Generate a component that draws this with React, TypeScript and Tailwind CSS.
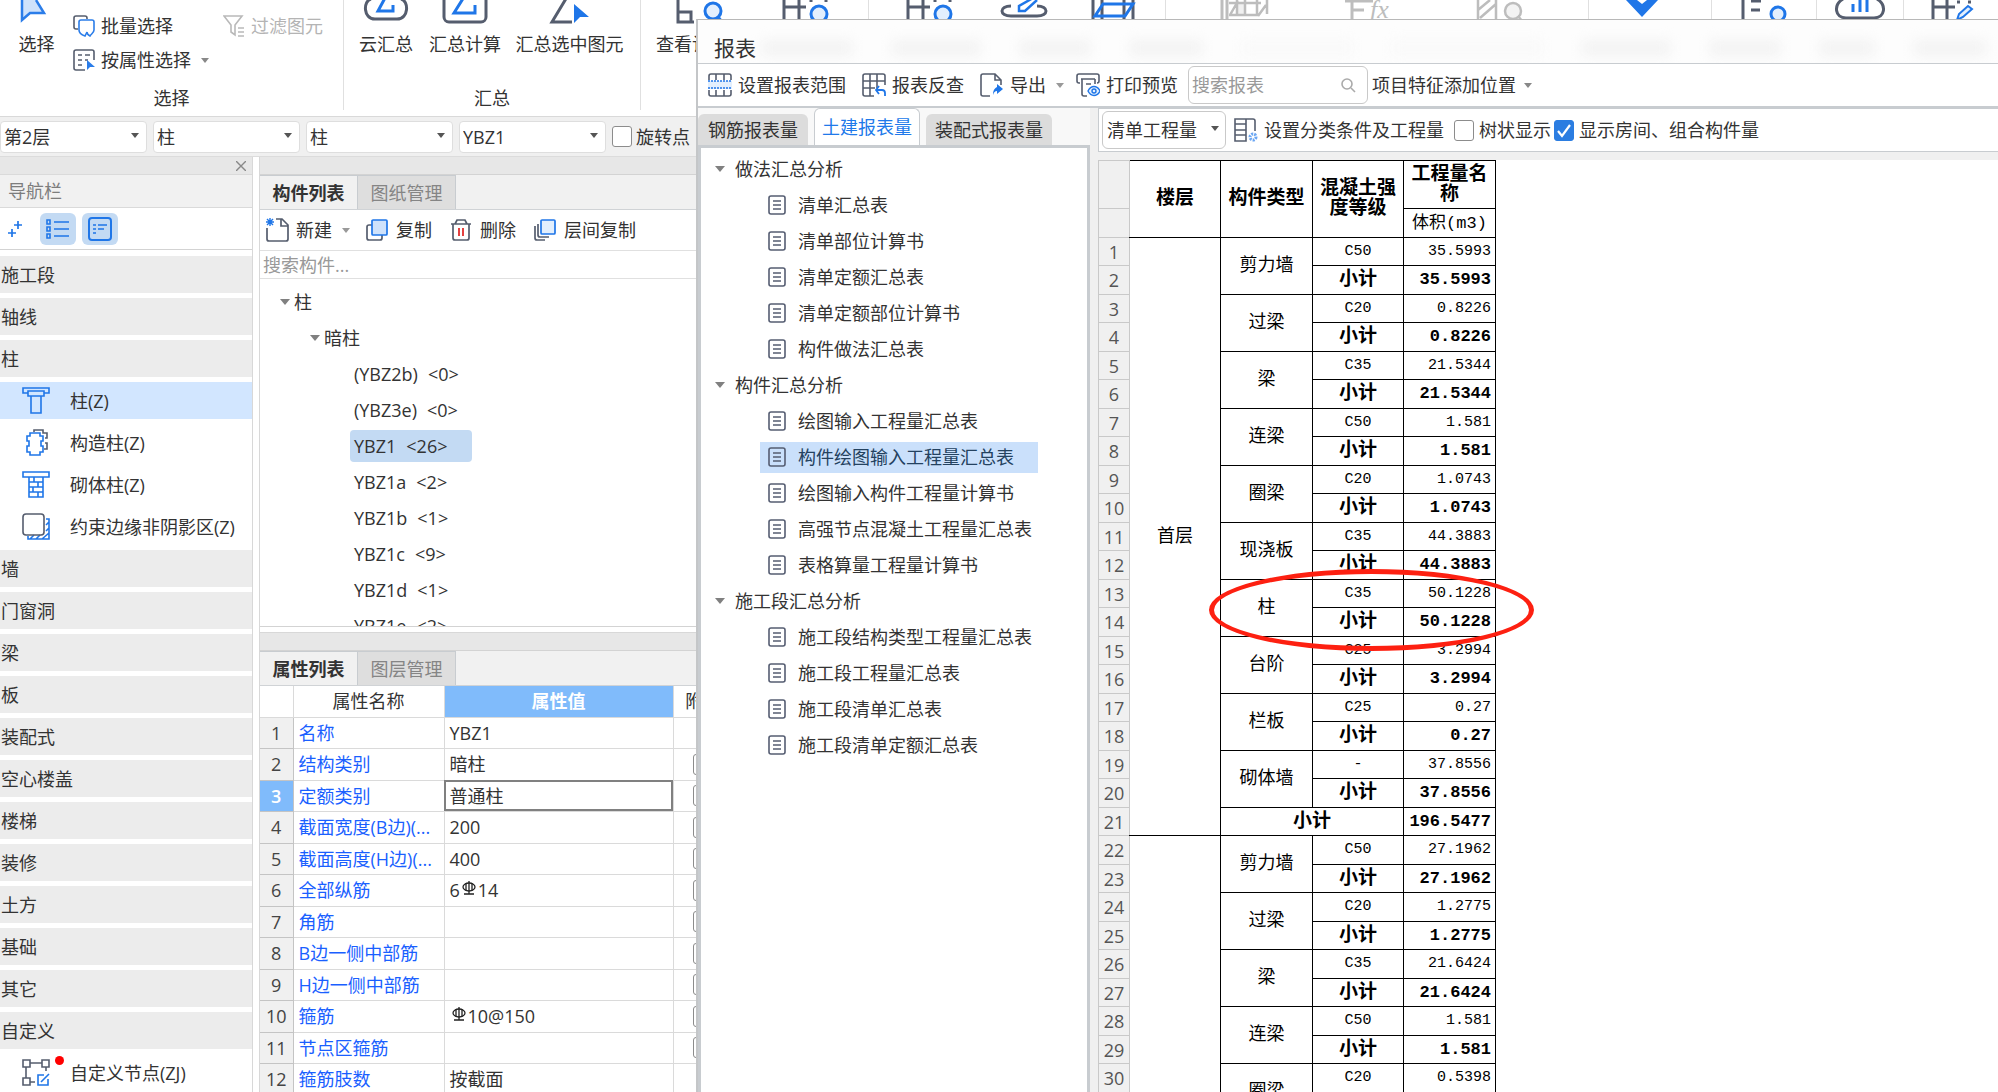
import { useState, type ReactNode } from 'react';

/**
 * Takeoff workspace with the report window open over it.
 *
 *   • Ribbon and context selectors along the top.
 *   • Navigation bar, component tree and property grid on the left.
 *   • Report window: report tree + quantity table.
 */

const NAV: { label: string; icon?: ReactNode; active?: boolean; dot?: boolean }[] = [
  { label: '施工段' },
  { label: '轴线' },
  { label: '柱' },
  { label: '柱(Z)', icon: <ColumnIcon />, active: true },
  { label: '构造柱(Z)', icon: <TieColumnIcon /> },
  { label: '砌体柱(Z)', icon: <MasonryIcon /> },
  { label: '约束边缘非阴影区(Z)', icon: <EdgeZoneIcon /> },
  { label: '墙' },
  { label: '门窗洞' },
  { label: '梁' },
  { label: '板' },
  { label: '装配式' },
  { label: '空心楼盖' },
  { label: '楼梯' },
  { label: '装修' },
  { label: '土方' },
  { label: '基础' },
  { label: '其它' },
  { label: '自定义' },
  { label: '自定义节点(ZJ)', icon: <CustomNodeIcon />, dot: true },
];

const COMPONENTS = [
  { name: '(YBZ2b)', count: 0 },
  { name: '(YBZ3e)', count: 0 },
  { name: 'YBZ1', count: 26, active: true },
  { name: 'YBZ1a', count: 2 },
  { name: 'YBZ1b', count: 1 },
  { name: 'YBZ1c', count: 9 },
  { name: 'YBZ1d', count: 1 },
  { name: 'YBZ1e', count: 2 },
];

const PROPS: { name: string; value: ReactNode; extra?: boolean }[] = [
  { name: '名称', value: 'YBZ1' },
  { name: '结构类别', value: '暗柱', extra: true },
  { name: '定额类别', value: '普通柱', extra: true },
  { name: '截面宽度(B边)(...', value: '200', extra: true },
  { name: '截面高度(H边)(...', value: '400', extra: true },
  { name: '全部纵筋', value: <>6<RebarMark />14</>, extra: true },
  { name: '角筋', value: '', extra: true },
  { name: 'B边一侧中部筋', value: '', extra: true },
  { name: 'H边一侧中部筋', value: '', extra: true },
  { name: '箍筋', value: <><RebarMark />10@150</>, extra: true },
  { name: '节点区箍筋', value: '', extra: true },
  { name: '箍筋肢数', value: '按截面' },
];

const REPORTS = [
  { title: '做法汇总分析', items: ['清单汇总表', '清单部位计算书', '清单定额汇总表', '清单定额部位计算书', '构件做法汇总表'] },
  {
    title: '构件汇总分析',
    items: ['绘图输入工程量汇总表', '构件绘图输入工程量汇总表', '绘图输入构件工程量计算书', '高强节点混凝土工程量汇总表', '表格算量工程量计算书'],
  },
  { title: '施工段汇总分析', items: ['施工段结构类型工程量汇总表', '施工段工程量汇总表', '施工段清单汇总表', '施工段清单定额汇总表'] },
];

type Entry = { type: string; grade: string; volume: string };
const FLOORS: { name: string; entries: Entry[]; total?: string }[] = [
  {
    name: '首层',
    total: '196.5477',
    entries: [
      { type: '剪力墙', grade: 'C50', volume: '35.5993' },
      { type: '过梁', grade: 'C20', volume: '0.8226' },
      { type: '梁', grade: 'C35', volume: '21.5344' },
      { type: '连梁', grade: 'C50', volume: '1.581' },
      { type: '圈梁', grade: 'C20', volume: '1.0743' },
      { type: '现浇板', grade: 'C35', volume: '44.3883' },
      { type: '柱', grade: 'C35', volume: '50.1228' },
      { type: '台阶', grade: 'C25', volume: '3.2994' },
      { type: '栏板', grade: 'C25', volume: '0.27' },
      { type: '砌体墙', grade: '-', volume: '37.8556' },
    ],
  },
  {
    name: '',
    entries: [
      { type: '剪力墙', grade: 'C50', volume: '27.1962' },
      { type: '过梁', grade: 'C20', volume: '1.2775' },
      { type: '梁', grade: 'C35', volume: '21.6424' },
      { type: '连梁', grade: 'C50', volume: '1.581' },
      { type: '圈梁', grade: 'C20', volume: '0.5398' },
    ],
  },
];

export default function App() {
  return (
    <div className="relative flex h-screen w-full flex-col overflow-hidden bg-white font-['Open_Sans','Noto_Sans_CJK_SC',sans-serif] text-lg leading-6 text-[#333]">
      <Ribbon />
      <ContextBar />
      <div className="flex min-h-0 flex-1">
        <NavPanel />
        <div className="flex min-w-0 flex-1 flex-col border-l border-[#d8d8d8]">
          <ComponentPanel />
          <PropertyPanel />
        </div>
      </div>
      <ReportWindow />
    </div>
  );
}

/* ---------- ribbon ---------- */

function Ribbon() {
  return (
    <header className="flex h-[117px] shrink-0 items-start overflow-hidden border-b border-[#d9d9d9] bg-white whitespace-nowrap">
      <section className="flex h-[110px] w-[344px] shrink-0 flex-col justify-between border-r border-[#e0e0e0]">
        <div className="flex">
          <RibbonTool label="选择" width="w-[73px]">
            <path d="M5 0v20l8-7h13L18 0z" fill="#cfe2fb" />
            <path d="M5 0v20l8-7h14L19 0" fill="none" stroke="#2b7de9" strokeWidth="2.5" />
          </RibbonTool>
          <div className="flex w-[140px] flex-col gap-2.5 pt-[14px]">
            <button className="flex items-center gap-1.5">
              <svg className="size-[22px]" viewBox="0 0 22 22" fill="none" strokeWidth="1.6">
                <path d="M5 14H3a2 2 0 0 1-2-2V3a2 2 0 0 1 2-2h9a2 2 0 0 1 2 2v1" stroke="#555d6e" />
                <path d="M6 7a2 2 0 0 1 2-2h11a2 2 0 0 1 2 2v8c0 3-3 4-4 6-2-1-3-2-3-4l-2 4c-3-1-6-3-6-6z" stroke="#2b7de9" />
              </svg>
              批量选择
            </button>
            <button className="flex items-center gap-1.5">
              <svg className="size-[22px]" viewBox="0 0 22 22" fill="none" strokeWidth="1.6">
                <path d="M12 21H3a2 2 0 0 1-2-2V3a2 2 0 0 1 2-2h16a2 2 0 0 1 2 2v8M5 6h4m3 0h5M5 11h4m3 0h3M5 16h4" stroke="#555d6e" />
                <path d="M14 11v10l3-3h5z" fill="#2b7de9" />
              </svg>
              按属性选择
              <Caret className="ml-1 text-[#888]" />
            </button>
          </div>
          <div className="flex flex-1 flex-col pt-[14px] pl-2.5 text-[#b4b4b4]">
            <button className="flex items-center gap-1.5" disabled>
              <svg className="size-[22px]" viewBox="0 0 22 22" fill="none" stroke="#b9b9b9" strokeWidth="1.6">
                <path d="M1 1h18l-7 9v10l-4-3v-7zM15 13h6M15 17h6M15 21h6" />
              </svg>
              过滤图元
            </button>
          </div>
        </div>
        <div className="text-center">选择</div>
      </section>

      <section className="flex h-[110px] w-[297px] shrink-0 flex-col justify-between border-r border-[#e0e0e0]">
        <div className="flex pl-[5px]">
          <RibbonTool label="云汇总" width="w-[74px]">
            <path d="M5 -1C-3 1 -3 19 9 19h22C43 19 43 1 35 -1" fill="none" stroke="#555d6e" strokeWidth="3" />
            <path d="M19 -2l-7 13h15V5" fill="none" stroke="#1f76e8" strokeWidth="3" />
          </RibbonTool>
          <RibbonTool label="汇总计算" width="w-[84px]">
            <path d="M-1 -2v19a5 5 0 0 0 5 5h32a5 5 0 0 0 5-5V-2" fill="none" stroke="#555d6e" strokeWidth="3" />
            <path d="M19 -3L9 13h21V5" fill="none" stroke="#1f76e8" strokeWidth="3" />
          </RibbonTool>
          <RibbonTool label="汇总选中图元" width="w-[125px]">
            <path d="M17 -3L2 22h20" fill="none" stroke="#555d6e" strokeWidth="3" />
            <path d="M24 4v19l6-6h9z" fill="#1f76e8" />
          </RibbonTool>
        </div>
        <div className="text-center">汇总</div>
      </section>

      <section className="flex h-[110px] w-[228px] shrink-0 border-r border-[#e0e0e0]">
        <RibbonTool label="查看计算式" width="w-[120px]">
          <path d="M-3 -1v23h16M-3 12h13v10" fill="none" stroke="#555d6e" strokeWidth="3" />
          <circle cx="32" cy="11" r="8" fill="#e3effd" stroke="#1f76e8" strokeWidth="3" />
          <path d="M37 17l5 6" stroke="#1f76e8" strokeWidth="3" />
        </RibbonTool>
        <RibbonTool width="w-[88px]"><GridSearch /></RibbonTool>
      </section>

      <section className="flex h-[110px] w-[297px] shrink-0 border-r border-[#e0e0e0]">
        <RibbonTool width="w-[120px]"><GridSearch /></RibbonTool>
        <RibbonTool width="w-[70px]">
          <path d="M7 6c-12 0-12 10 0 10h26c12 0 12-10 0-10" fill="none" stroke="#555d6e" strokeWidth="3" />
          <path d="M29 -2L15 6v5h6L33 0" fill="none" stroke="#1f76e8" strokeWidth="2.5" />
        </RibbonTool>
        <RibbonTool width="w-[107px]">
          <path d="M0 0v24M9 0v24M31 0v24M40 0v24" stroke="#555d6e" strokeWidth="3" />
          <path d="M10 4h30l-8 12H2z" fill="none" stroke="#1f76e8" strokeWidth="3" />
        </RibbonTool>
      </section>

      <section className="flex h-[110px] w-[423px] shrink-0 border-r border-[#e0e0e0]">
        <RibbonTool width="w-[158px]">
          <path d="M12 3h8v12h-8z" fill="#f0f0f0" />
          <path d="M-3 0v24M2 0v24" stroke="#bdbdbd" strokeWidth="3" />
          <path d="M12 0v16M20 0v16M32 0v16M4 3h32M4 15h30M5 15l8-14M33 16l8-11M42 0v14" fill="none" stroke="#bdbdbd" strokeWidth="2.5" />
        </RibbonTool>
        <RibbonTool width="w-[86px]">
          <path d="M-2 1h28M5 0v24M5 10h12" fill="none" stroke="#bdbdbd" strokeWidth="3" />
          <text x="23" y="18" className="font-['Liberation_Serif',serif] text-[26px] italic" fill="#bdbdbd">fx</text>
        </RibbonTool>
        <RibbonTool width="w-[179px]">
          <path d="M-2 0v24M16 0v24M-2 10L10 0M0 18L16 4" fill="none" stroke="#bdbdbd" strokeWidth="2.5" />
          <circle cx="33" cy="11" r="8" fill="#f3f3f3" stroke="#bdbdbd" strokeWidth="2.5" />
          <path d="M38 16l4 5" stroke="#bdbdbd" strokeWidth="2.5" />
        </RibbonTool>
      </section>

      <section className="flex h-[110px] w-[123px] shrink-0 border-r border-[#e0e0e0]">
        <RibbonTool width="w-[105px]">
          <path d="M4 0h11l5 4 5-4h11L20 17z" fill="#1f76e8" />
        </RibbonTool>
      </section>
      <section className="h-[110px] w-[105px] shrink-0 border-r border-[#e0e0e0]">
        <RibbonTool width="w-full">
          <path d="M-1 0v24M7 1h10M7 10h9" stroke="#555d6e" strokeWidth="3" />
          <circle cx="34" cy="14" r="7" fill="#e3effd" stroke="#1f76e8" strokeWidth="3" />
        </RibbonTool>
      </section>
      <section className="h-[110px] w-[87px] shrink-0 border-r border-[#e0e0e0]">
        <RibbonTool width="w-full">
          <path d="M3 -1C-7 5 -5 18 6 18h28c11 0 13-13 3-19" fill="none" stroke="#555d6e" strokeWidth="3" />
          <path d="M13 4v8M20 0v12M27 0v12" stroke="#1f76e8" strokeWidth="3" />
        </RibbonTool>
      </section>
      <section className="h-[110px] flex-1">
        <RibbonTool width="w-[100px]">
          <path d="M-1 0v24M13 0v24M-1 7h22M23 2h3M34 2h3" stroke="#555d6e" strokeWidth="3" />
          <path d="M23 20l2-6 9-8 4 3-9 8z" fill="#e3effd" stroke="#1f76e8" strokeWidth="2" />
        </RibbonTool>
      </section>
    </header>
  );
}

function RibbonTool({ label, width, children }: { label?: string; width: string; children: ReactNode }) {
  return (
    <button className={`flex shrink-0 flex-col items-center gap-2 ${width}`}>
      <svg className="h-6 w-10 overflow-visible" viewBox="0 0 40 24">{children}</svg>
      {label}
    </button>
  );
}

function GridSearch() {
  return (
    <>
      <path d="M-1 0v24M14 0v24M-1 7h22M26 0v2M41 0v2" stroke="#555d6e" strokeWidth="3" />
      <circle cx="34" cy="14" r="8" fill="#e3effd" stroke="#1f76e8" strokeWidth="3" />
    </>
  );
}

function ContextBar() {
  return (
    <div className="flex h-10 shrink-0 items-center gap-1.5 border-b border-[#dcdcdc] bg-[#f0f0f0]">
      <Combo label="楼层" value="第2层" />
      <Combo label="构件大类" value="柱" />
      <Combo label="构件类型" value="柱" />
      <Combo label="构件" value="YBZ1" />
      <label className="flex items-center gap-1 whitespace-nowrap">
        <Check />
        旋转点
      </label>
    </div>
  );
}

function Combo({ label, value }: { label: string; value: string }) {
  return (
    <div className="relative w-[147px]">
      <select
        aria-label={label}
        className="h-8 w-full appearance-none rounded border border-[#dedede] bg-white pl-[3px] leading-6"
      >
        <option>{value}</option>
      </select>
      <Caret className="pointer-events-none absolute top-3 right-2 text-[#555]" />
    </div>
  );
}

/* ---------- left panels ---------- */

function NavPanel() {
  return (
    <nav className="mr-1.5 flex w-[253px] shrink-0 flex-col overflow-hidden border-r border-[#d8d8d8]">
      <div className="flex h-[18px] shrink-0 items-center justify-end border-b border-[#dadada] bg-[#e7e7e7] pr-1.5">
        <button aria-label="关闭">
          <svg className="size-2.5" viewBox="0 0 10 10" stroke="#888" strokeWidth="1.4"><path d="M0 0l10 10M10 0L0 10" /></svg>
        </button>
      </div>
      <div className="flex h-[33px] shrink-0 items-center border-b border-[#dadada] bg-[#f1f1f1] pl-2 text-[#7d7d7d]">导航栏</div>
      <div className="mb-1.5 flex h-[42px] shrink-0 items-center gap-1.5 border-b border-[#d3d3d3] pl-2">
        <button aria-label="展开" className="w-[26px]">
          <svg className="h-4 w-[14px]" viewBox="0 0 14 16" stroke="#1f76e8" strokeWidth="1.7"><path d="M10 0v8M6 4h8M4 8v8M0 12h8" /></svg>
        </button>
        <button aria-label="列表" className="flex h-8 w-9 items-center justify-center rounded-md bg-[#c3daf3]">
          <svg className="h-5 w-6" viewBox="0 0 24 20" fill="none" stroke="#1f76e8" strokeWidth="1.6">
            <path d="M8 3h15M8 10h15M8 17h15" />
            <path d="M1 1h3v4H1zM1 8h3v4H1zM1 15h3v4H1z" />
          </svg>
        </button>
        <button aria-label="详情" className="flex h-8 w-9 items-center justify-center rounded-md bg-[#c3daf3]">
          <svg className="size-6" viewBox="0 0 24 24" fill="none" stroke="#1f76e8" strokeWidth="1.6">
            <rect x="1" y="1" width="22" height="22" rx="3" strokeWidth="2" />
            <path d="M5 8h3m2 0h9M5 12h3m2 0h6M5 16h3" />
          </svg>
        </button>
      </div>
      <ul className="flex flex-col gap-[5px]">
        {NAV.map((n) => (
          <li key={n.label}>
            {n.icon ? (
              <button className={`relative flex h-[37px] w-full items-center gap-5 pl-[22px] whitespace-nowrap ${n.active ? 'bg-[#d2e6ff]' : ''}`}>
                {n.icon}
                {n.label}
                {n.dot && <span className="absolute top-0.5 left-[55px] size-[9px] rounded-full bg-[#ff0000]" />}
              </button>
            ) : (
              <button className="flex h-[37px] w-full items-center bg-[#ececec] pl-px">{n.label}</button>
            )}
          </li>
        ))}
      </ul>
    </nav>
  );
}

function ComponentPanel() {
  return (
    <section className="flex h-[470px] shrink-0 flex-col overflow-hidden border-b border-[#d3d3d3]">
      <PanelTabs tabs={['构件列表', '图纸管理']} />
      <div className="flex h-[41px] shrink-0 items-center border-b border-[#e0e0e0] pl-1.5 whitespace-nowrap">
        <button className="mr-4 flex items-center gap-1.5">
          <svg className="size-6" viewBox="0 0 24 24" fill="none" stroke="#555d6e" strokeWidth="1.7">
            <path d="M1 10v11a2 2 0 0 0 2 2h17a2 2 0 0 0 2-2V7l-6-6h-6M15 1v7h7" />
            <path d="M1 1l6 6M7 1L1 7M4 0v8M0 4h8" stroke="#1f76e8" strokeWidth="1.4" />
          </svg>
          新建
          <Caret className="ml-1 text-[#999]" />
        </button>
        <button className="mr-[18px] flex items-center gap-2">
          <svg className="size-[22px]" viewBox="0 0 22 22" fill="none" strokeWidth="1.7">
            <rect x="1" y="6" width="15" height="15" rx="2" stroke="#555d6e" />
            <rect x="6" y="1" width="15" height="15" rx="1" fill="#cfe2fb" stroke="#1f76e8" />
          </svg>
          复制
        </button>
        <button className="mr-[18px] flex items-center gap-2">
          <svg className="size-[22px]" viewBox="0 0 22 22" fill="none" stroke="#555d6e" strokeWidth="1.7">
            <path d="M1 5h20M5 5l2-4h8l2 4M3 5v14a2 2 0 0 0 2 2h12a2 2 0 0 0 2-2V5" />
            <path d="M9 9v8M13 9v8" stroke="#e02020" />
          </svg>
          删除
        </button>
        <button className="flex items-center gap-2">
          <svg className="size-[22px]" viewBox="0 0 22 22" fill="none" strokeWidth="1.7">
            <path d="M1 7v12a2 2 0 0 0 2 2h8M4 5v11a2 2 0 0 0 2 2h9" stroke="#555d6e" />
            <rect x="7" y="1" width="14" height="14" rx="1" fill="#e3effd" stroke="#1f76e8" />
          </svg>
          层间复制
        </button>
      </div>
      <input
        aria-label="搜索构件"
        placeholder="搜索构件..."
        className="h-7 shrink-0 border-b border-[#e0e0e0] pl-[3px] placeholder:text-[#999]"
      />
      <ul className="pt-[5px]">
        <li className="flex h-9 items-center gap-1 pl-5"><Twist />柱</li>
        <li className="flex h-9 items-center gap-1 pl-[50px]"><Twist />暗柱</li>
        {COMPONENTS.map((c) => (
          <li key={c.name} className="flex h-9 items-center pl-[90px]">
            <button className={`flex h-8 items-center gap-2.5 rounded px-1 ${c.active ? 'w-[122px] bg-[#c3daf3]' : ''}`}>
              <span>{c.name}</span>
              <span>&lt;{c.count}&gt;</span>
            </button>
          </li>
        ))}
      </ul>
    </section>
  );
}

function PropertyPanel() {
  return (
    <section className="mt-[5px] flex flex-1 flex-col overflow-hidden border-t border-[#d8d8d8]">
      <PanelTabs tabs={['属性列表', '图层管理']} />
      <table className="w-[473px] table-fixed border-collapse">
        <colgroup>
          <col className="w-[33px]" />
          <col className="w-[151px]" />
          <col className="w-[229px]" />
          <col className="w-[60px]" />
        </colgroup>
        <thead>
          <tr className="h-[31px] border-b border-[#dadada]">
            <th aria-label="序号" className="border-r border-[#dadada]" />
            <th className="border-r border-[#dadada] p-0 font-normal">属性名称</th>
            <th className="bg-[#80bbfb] p-0 font-semibold text-white">属性值</th>
            <th className="border-l border-[#dadada] p-0 font-normal">附加</th>
          </tr>
        </thead>
        <tbody>
          {PROPS.map((p, i) => {
            const picked = i === 2;
            return (
              <tr key={p.name} className={`border-b border-[#dadada] ${i % 2 ? 'h-8' : 'h-[31px]'}`}>
                <td className={`border-r border-b border-[#c4c4c4] p-0 text-center ${picked ? 'bg-[#80bbfb] font-semibold text-white' : 'bg-[#f0f0f0] text-[#444]'}`}>
                  {i + 1}
                </td>
                <td className="border-r border-[#dadada] p-0 pl-[5px] whitespace-nowrap text-[#1a5fff]">{p.name}</td>
                <td className={`p-0 pl-[5px] ${picked ? 'outline-2 -outline-offset-2 outline-[#808080]' : ''}`}>{p.value}</td>
                <td className="border-l border-[#dadada] p-0">
                  {p.extra && <span className="flex justify-center"><Check label={`${p.name}附加`} /></span>}
                </td>
              </tr>
            );
          })}
        </tbody>
      </table>
    </section>
  );
}

function PanelTabs({ tabs }: { tabs: string[] }) {
  return (
    <>
      <div className="h-[18px] shrink-0 border-b border-[#d3d3d3] bg-[#e7e7e7]" />
      <div className="flex h-[35px] shrink-0 border-b border-[#d0d3d6] bg-[#f1f1f1]">
        {tabs.map((t, i) => (
          <button
            key={t}
            className={`w-[98px] border-t border-r border-[#c8ccd0] ${i === 0 ? 'bg-[#f1f1f1] font-bold' : 'bg-[#dedede] text-[#858585]'}`}
          >
            {t}
          </button>
        ))}
      </div>
    </>
  );
}

/* ---------- report window ---------- */

function ReportWindow() {
  const [report, setReport] = useState('构件绘图输入工程量汇总表');
  return (
    <div className="absolute top-[19px] right-0 bottom-0 left-[696px] flex flex-col border-t border-l-2 border-t-[#b8b8b8] border-l-[#c4c6c8] bg-[#f0f0f0] whitespace-nowrap">
      <div className="relative flex h-11 shrink-0 items-center overflow-hidden border-b border-[#c8ccd0] bg-[#fdfdfd] pt-3 pl-4">
        <TitleHaze />
        <h1 className="relative text-[21px] leading-7">报表</h1>
      </div>

      <div className="flex h-11 shrink-0 items-center border-b-2 border-[#c8ccd0] bg-white pl-2.5">
        <button className="mr-4 flex items-center gap-1.5">
          <svg className="size-6" viewBox="0 0 24 24" fill="none" stroke="#555d6e" strokeWidth="1.6">
            <rect x="0" y="8" width="24" height="8" fill="#e3effd" stroke="none" />
            <path d="M1 7V3a2 2 0 0 1 2-2h18a2 2 0 0 1 2 2v4M8 1v6M16 1v6M1 17v4a2 2 0 0 0 2 2h18a2 2 0 0 0 2-2v-4M8 17v6M16 17v6" />
            <path d="M0 8h24M0 15h24" stroke="#1f76e8" strokeDasharray="2 1" />
          </svg>
          设置报表范围
        </button>
        <button className="mr-4 flex items-center gap-1.5">
          <svg className="size-6" viewBox="0 0 24 24" fill="none" stroke="#555d6e" strokeWidth="1.6">
            <path d="M12 23H3a2 2 0 0 1-2-2V3a2 2 0 0 1 2-2h18a2 2 0 0 1 2 2v9M8 1v22M15 1v14M1 8h22M1 15h12" />
            <path d="M17 13l-3 4 3 4M14 17h6a3 3 0 0 1 3 3v3" stroke="#1f76e8" strokeWidth="1.8" />
          </svg>
          报表反查
        </button>
        <button className="mr-3 flex items-center gap-1.5">
          <svg className="size-6" viewBox="0 0 24 24" fill="none" stroke="#555d6e" strokeWidth="1.6">
            <path d="M10 23H3a2 2 0 0 1-2-2V3a2 2 0 0 1 2-2h12l6 6v5M15 1v6h6" />
            <path d="M17 11l6 5-6 5v-3c-2 0-3 1-4 4 0-5 2-7 4-8z" fill="#1f76e8" stroke="none" />
          </svg>
          导出
          <Caret className="ml-1 text-[#999]" />
        </button>
        <button className="mr-2.5 flex items-center gap-1.5">
          <svg className="size-6" viewBox="0 0 24 24" fill="none" stroke="#555d6e" strokeWidth="1.6">
            <path d="M4 10H3a2 2 0 0 1-2-2V3a2 2 0 0 1 2-2h18a2 2 0 0 1 2 2v5a2 2 0 0 1-2 2M5 6h14M6 6v15a2 2 0 0 0 2 2h3M10 11h5M19 6v5" />
            <path d="M12 18c3-6 9-6 12 0-3 6-9 6-12 0z" fill="#e3effd" stroke="#1f76e8" strokeWidth="1.4" />
            <circle cx="18" cy="18" r="2" stroke="#1f76e8" strokeWidth="1.4" />
          </svg>
          打印预览
        </button>
        <div className="relative mr-1 w-[180px]">
          <input
            aria-label="搜索报表"
            placeholder="搜索报表"
            className="h-[38px] w-full rounded-md border border-[#c9c9c9] bg-white pr-8 pl-[3px] placeholder:text-[#999]"
          />
          <svg className="pointer-events-none absolute top-3 right-3 size-[15px]" viewBox="0 0 15 15" fill="none" stroke="#aaa" strokeWidth="1.6">
            <circle cx="6" cy="6" r="5" />
            <path d="M10 10l4 4" />
          </svg>
        </div>
        <button className="flex items-center gap-2">
          项目特征添加位置
          <Caret className="text-[#888]" />
        </button>
      </div>

      <div className="flex min-h-0 flex-1">
        <aside className="mr-2 flex w-[392px] shrink-0 flex-col">
          <div className="flex h-[37px] shrink-0 items-end gap-1.5 bg-[#f8f8f8]">
            <ReportTab label="钢筋报表量" width="w-[110px]" />
            <ReportTab label="土建报表量" width="w-[106px]" active />
            <ReportTab label="装配式报表量" width="w-[126px]" />
          </div>
          <div className="min-h-0 flex-1 overflow-hidden border-x-3 border-t-3 border-[#c8ccd0] bg-white pt-[3px]">
            {REPORTS.map((g) => (
              <section key={g.title}>
                <h2 className="flex h-9 items-center gap-2.5 pl-[14px]"><Twist />{g.title}</h2>
                <ul>
                  {g.items.map((r) => (
                    <li key={r} className="flex h-9 items-center pl-[59px]">
                      <button
                        onClick={() => setReport(r)}
                        className={`flex h-[31px] items-center gap-3 px-2 ${r === report ? 'w-[278px] bg-[#cae0fb] text-[#24425f]' : ''}`}
                      >
                        <svg className="h-5 w-[18px] shrink-0" viewBox="0 0 18 20" fill="none" stroke="#555d72" strokeWidth="1.6">
                          <rect x="1" y="1" width="16" height="18" rx="2" />
                          <path d="M5 6h8M5 10h8M5 14h8" />
                        </svg>
                        {r}
                      </button>
                    </li>
                  ))}
                </ul>
              </section>
            ))}
          </div>
        </aside>

        <main className="flex min-w-0 flex-1 flex-col">
          <div className="flex h-11 shrink-0 items-center border border-r-0 border-[#c8ccd0] bg-white pl-[3px]">
            <div className="relative mr-2 w-[124px]">
              <select
                aria-label="工程量类型"
                className="h-[38px] w-full appearance-none rounded-md border border-[#c9c9c9] bg-white pl-1"
              >
                <option>清单工程量</option>
              </select>
              <Caret className="pointer-events-none absolute top-[15px] right-[7px] text-[#555]" />
            </div>
            <button className="mr-[10px] flex items-center gap-1.5">
              <svg className="size-6" viewBox="0 0 24 24" fill="none" stroke="#555d6e" strokeWidth="1.6">
                <path d="M1 1h11v22H1zM1 6h11M1 12h11M1 17h11M12 1h7a2 2 0 0 1 2 2v10" />
                <circle cx="19" cy="19" r="3" stroke="#6aa6f3" strokeWidth="3" strokeDasharray="2 1" />
              </svg>
              设置分类条件及工程量
            </button>
            <label className="mr-[3px] flex items-center gap-[5px]"><Check />树状显示</label>
            <label className="flex items-center gap-[5px]"><Check on />显示房间、组合构件量</label>
          </div>
          <div className="relative mt-2 min-h-0 flex-1 overflow-hidden bg-white">
            <QuantityTable />
            <div className="absolute top-[409px] left-[111px] h-[82px] w-[325px] rounded-[50%] border-5 border-[#fd2011]" />
          </div>
        </main>
      </div>
    </div>
  );
}

/* Ribbon captions showing faintly through the title bar. */
function TitleHaze() {
  return (
    <div aria-hidden="true" className="absolute inset-x-0 top-5 flex h-4 gap-10 pl-16 blur-[6px]">
      <span className="w-[90px] bg-[#f3f3f3]" />
      <span className="w-[88px] bg-[#f3f3f3]" />
      <span className="w-[70px] bg-[#f3f3f3]" />
      <span className="w-[72px] bg-[#f3f3f3]" />
      <span className="w-[110px] bg-[#f9f9f9]" />
      <span className="w-[150px] bg-[#f9f9f9]" />
      <span className="w-[88px] bg-[#f3f3f3]" />
      <span className="w-[70px] bg-[#f3f3f3]" />
      <span className="w-[54px] bg-[#f3f3f3]" />
      <span className="w-[72px] bg-[#f3f3f3]" />
    </div>
  );
}

function ReportTab({ label, width, active }: { label: string; width: string; active?: boolean }) {
  return (
    <button
      className={`rounded-t-md ${width} ${
        active ? 'h-[37px] border-x border-t border-[#c8ccd0] bg-white text-[#2079ea]' : 'h-[31px] bg-[#dcdcdc]'
      }`}
    >
      {label}
    </button>
  );
}

function QuantityTable() {
  let n = 0;
  return (
    <table className="w-[397px] table-fixed border-collapse font-['Liberation_Mono','Noto_Sans_CJK_SC',monospace] leading-5 text-black">
      <colgroup>
        <col className="w-[31px]" />
        <col className="w-[91px]" />
        <col className="w-[92px]" />
        <col className="w-[91px]" />
        <col className="w-[92px]" />
      </colgroup>
      <thead className="text-[19px]">
        <tr className="h-12">
          <RowNo />
          <th rowSpan={2} className="border border-l-[#c9c9c9] border-t-black border-r-black border-b-black p-0">楼层</th>
          <th rowSpan={2} className="border border-black p-0">构件类型</th>
          <th rowSpan={2} className="border border-black p-0">混凝土强<br />度等级</th>
          <th className="border border-black p-0">工程量名<br />称</th>
        </tr>
        <tr className="h-[29px]">
          <RowNo />
          <th className="border border-black p-0 font-normal">
            <span className="text-[17px]">体积(m3)</span>
          </th>
        </tr>
      </thead>
      <tbody>
        {FLOORS.map((f, fi) => {
          const span = f.entries.length * 2 + (f.total ? 1 : 0);
          return [
            ...f.entries.flatMap((e, i) => [
              <tr key={`${fi}-${i}`} className={fi ? 'h-[29px]' : 'h-7'}>
                <RowNo n={++n} />
                {i === 0 && (
                  <td rowSpan={span} className="border border-l-[#c9c9c9] border-t-black border-r-black border-b-black p-0 text-center">
                    {f.name}
                  </td>
                )}
                <td rowSpan={2} className="border border-black p-0 text-center">{e.type}</td>
                <td className="border border-black p-0 text-center text-[15px]">{e.grade}</td>
                <td className="border border-black p-0 pr-1 text-right text-[15px]">{e.volume}</td>
              </tr>,
              <tr key={`${fi}-${i}-sub`} className={fi ? 'h-7' : 'h-[29px]'}>
                <RowNo n={++n} />
                <td className="border border-black p-0 text-center text-[19px] font-bold">小计</td>
                <td className="border border-black p-0 pr-1 text-right text-[17px] font-bold">{e.volume}</td>
              </tr>,
            ]),
            f.total && (
              <tr key={`${fi}-total`} className="h-7">
                <RowNo n={++n} />
                <td colSpan={2} className="border border-black p-0 text-center text-[19px] font-bold">小计</td>
                <td className="border border-black p-0 pr-1 text-right text-[17px] font-bold">{f.total}</td>
              </tr>
            ),
          ];
        })}
      </tbody>
    </table>
  );
}

function RowNo({ n }: { n?: number }) {
  return (
    <td className="border border-[#c9c9c9] bg-[#f0f0f0] p-0 text-center font-['Open_Sans',sans-serif] text-[#555]">{n}</td>
  );
}

/* ---------- small parts ---------- */

function Check({ on, label }: { on?: boolean; label?: string }) {
  return (
    <span className="relative inline-flex">
      <input
        type="checkbox"
        defaultChecked={on}
        aria-label={label}
        className="h-[21px] w-5 appearance-none rounded-[3px] border border-[#8c8c8c] bg-white checked:border-[#2b7de1] checked:bg-[#2b7de1]"
      />
      {on && (
        <svg className="pointer-events-none absolute top-1 left-[3px] size-[14px]" viewBox="0 0 14 14" fill="none" stroke="#fff" strokeWidth="2.2">
          <path d="M1 7l4 5 8-11" />
        </svg>
      )}
    </span>
  );
}

function Caret({ className }: { className?: string }) {
  return (
    <svg className={`h-[5px] w-2 shrink-0 ${className ?? ''}`} viewBox="0 0 8 5" fill="currentColor"><path d="M0 0h8L4 5z" /></svg>
  );
}

function Twist() {
  return (
    <svg className="h-1.5 w-2.5 shrink-0" viewBox="0 0 10 6" fill="#808080"><path d="M0 0h10L5 6z" /></svg>
  );
}

/* Grade mark of the rebar: oval, three bars and a foot. */
function RebarMark() {
  return (
    <svg className="mx-0.5 inline-block size-[14px] align-[2px]" viewBox="0 0 14 14" fill="none" stroke="#222" strokeWidth="1.3">
      <ellipse cx="7" cy="6" rx="6" ry="4" />
      <path d="M7 0v13M4 2v8M10 2v8M2 13h10" />
    </svg>
  );
}

function ColumnIcon() {
  return (
    <svg className="h-[27px] w-7 shrink-0" viewBox="0 0 28 27" fill="none" stroke="#1f76e8" strokeWidth="1.6">
      <path d="M6 6H1V1h26v5h-5" />
      <path d="M6 4h16v5H6zM9 9h10v17H9z" />
    </svg>
  );
}

function TieColumnIcon() {
  return (
    <svg className="h-[27px] w-7 shrink-0" viewBox="0 0 28 27" fill="none" stroke="#1f76e8" strokeWidth="1.6">
      <path d="M12 3V1h9v3h4v5h-2M23 14h2v6h-3" stroke="#555d6e" />
      <path d="M8 4h10v3h3v5h-2v5h2v6h-3v3H8v-3H5v-6h2v-5H5V7h3z" />
    </svg>
  );
}

function MasonryIcon() {
  return (
    <svg className="h-[27px] w-7 shrink-0" viewBox="0 0 28 27" fill="none" stroke="#1f76e8" strokeWidth="1.6">
      <path d="M1 1h26v5H1zM7 6v20h14V6M7 11h14M7 16h14M7 21h14M12 6v5M16 11v5M11 16v5M16 21v5" />
    </svg>
  );
}

function EdgeZoneIcon() {
  return (
    <svg className="h-[27px] w-7 shrink-0" viewBox="0 0 28 27" fill="none" stroke="#1f76e8" strokeWidth="1.6">
      <path d="M24 6h3v20H6v-3M24 12l3-3M24 18l3-3M20 26l7-6M14 26l4-4M8 26l4-4" />
      <rect x="1" y="1" width="21" height="21" rx="3" stroke="#555d6e" />
    </svg>
  );
}

function CustomNodeIcon() {
  return (
    <svg className="h-[27px] w-7 shrink-0" viewBox="0 0 28 27" fill="none" stroke="#555d6e" strokeWidth="1.6">
      <path d="M1 1h7v7H1zM20 1h7v7h-7zM1 19h7v7H1zM8 4h12M4 8v11M8 23h5M24 8v4" />
      <path d="M22 16h-6v10h10v-6M19 23l8-8" stroke="#1f76e8" />
    </svg>
  );
}
